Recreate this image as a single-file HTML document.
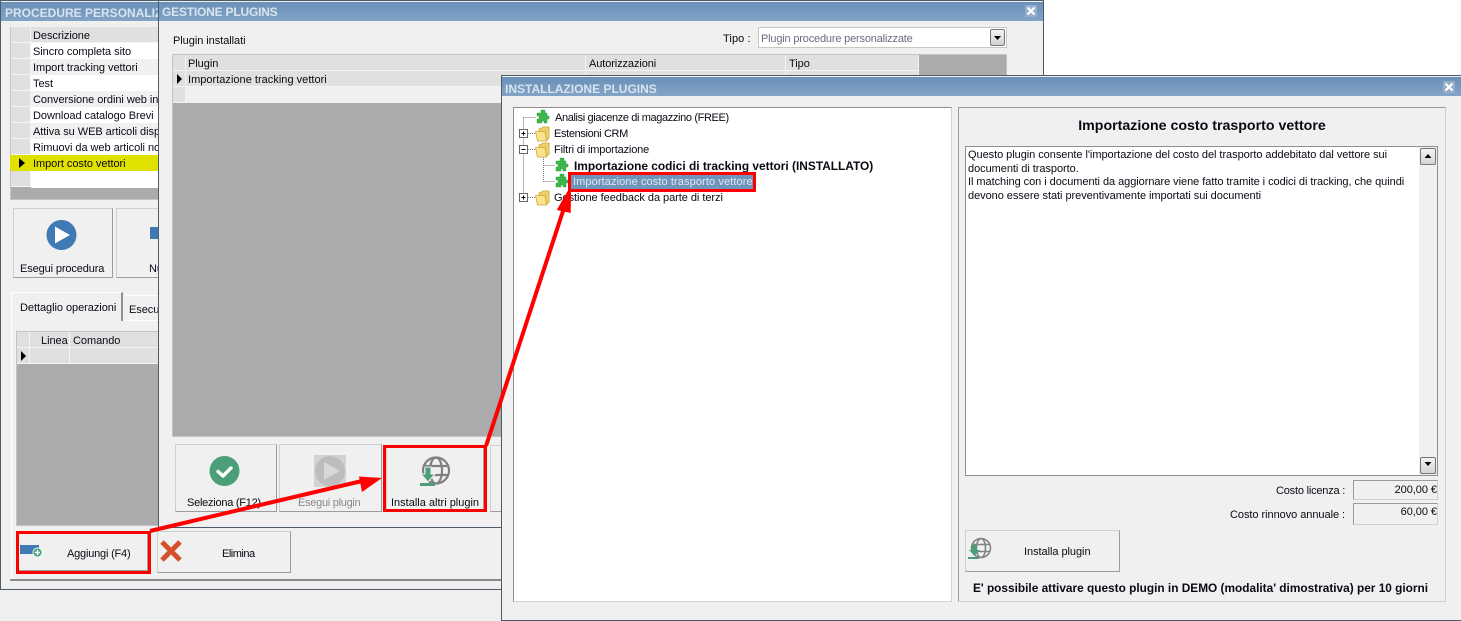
<!DOCTYPE html>
<html><head><meta charset="utf-8"><style>
html,body{margin:0;padding:0;width:1461px;height:621px;overflow:hidden;background:#fff}
body{position:relative;font-family:"Liberation Sans",sans-serif;font-size:11px;letter-spacing:-.05px;color:#0a0a14}
div{position:absolute;box-sizing:border-box}
.t{white-space:nowrap;line-height:14px;height:14px}
.b{font-weight:bold;letter-spacing:0}
.win{background:#f0f0f0;border:1px solid #4d5a68;overflow:hidden}
.bar{left:0;right:0;height:19px;background:linear-gradient(#6a90b8,#82a3c6)}
.ttl{color:#d9e4ee;font-weight:bold;font-size:12px;line-height:18px;white-space:nowrap;letter-spacing:0}
.hc{background:#e0e0e0;border-right:1px solid #f4f4f4;border-bottom:1px solid #f4f4f4}
.btn{background:#f0f0f0;border:1px solid;border-color:#cfcfcf #9c9c9c #9c9c9c #cfcfcf}
.red{border:3px solid #f00}
svg{position:absolute;overflow:visible}
</style></head><body>

<!-- area under window 1 -->
<div style="left:0;top:589px;width:520px;height:32px;background:#efefef"></div>

<!-- WINDOW 1 -->
<div class="win" style="left:0;top:0;width:520px;height:590px">
 <div class="bar" style="top:1px"></div>
 <div class="ttl" style="left:4px;top:3px">PROCEDURE PERSONALIZZATE</div>
 <div style="left:9px;top:26px;width:390px;height:173px;background:#ababab;border:1px solid #c4c4c4"></div>
</div>
<div style="left:31px;top:43px;width:130px;height:145px;background:#fff"></div>
<div class="hc" style="left:11px;top:27px;width:20px;height:16px"></div>
<div class="hc" style="left:31px;top:27px;width:130px;height:16px"></div>
<div class="t" style="left:33px;top:29px">Descrizione</div>
<div class="hc" style="left:11px;top:43px;width:20px;height:16px"></div>
<div class="hc" style="left:11px;top:59px;width:20px;height:16px"></div>
<div class="hc" style="left:11px;top:75px;width:20px;height:16px"></div>
<div class="hc" style="left:11px;top:91px;width:20px;height:16px"></div>
<div class="hc" style="left:11px;top:107px;width:20px;height:16px"></div>
<div class="hc" style="left:11px;top:123px;width:20px;height:16px"></div>
<div class="hc" style="left:11px;top:139px;width:20px;height:16px"></div>
<div class="hc" style="left:11px;top:171px;width:20px;height:16px"></div>
<div style="left:31px;top:59px;width:130px;height:16px;background:#f0f0f0"></div>
<div style="left:31px;top:91px;width:130px;height:16px;background:#f0f0f0"></div>
<div style="left:31px;top:123px;width:130px;height:16px;background:#f0f0f0"></div>
<div style="left:10px;top:155px;width:150px;height:16px;background:#e1e100"></div>
<div class="t" style="left:33px;top:45px">Sincro completa sito</div>
<div class="t" style="left:33px;top:61px">Import tracking vettori</div>
<div class="t" style="left:33px;top:77px">Test</div>
<div class="t" style="left:33px;top:93px">Conversione ordini web in</div>
<div class="t" style="left:33px;top:109px">Download catalogo Brevi</div>
<div class="t" style="left:33px;top:125px">Attiva su WEB articoli disponibili</div>
<div class="t" style="left:33px;top:141px">Rimuovi da web articoli non</div>
<div class="t" style="left:33px;top:157px">Import costo vettori</div>
<svg style="left:0;top:0" width="160" height="400"><path d="M19 158l6 5-6 5z" fill="#000"/></svg>

<div class="btn" style="left:13px;top:208px;width:100px;height:70px"></div>
<svg style="left:46px;top:220px" width="31" height="31"><circle cx="15.500" cy="15" r="15" fill="#3f7ab5"/><path d="M9 6.500l15 8.500-15 8.500z" fill="#fff"/></svg>
<div class="t" style="left:20px;top:262px;letter-spacing:-.12px">Esegui procedura</div>
<div class="btn" style="left:116px;top:208px;width:60px;height:70px"></div>
<div style="left:150px;top:227px;width:20px;height:12px;background:#3f7ab5"></div>
<div class="t" style="left:149px;top:262px">Nuova</div>

<div style="left:11px;top:320px;width:160px;height:259px;border-left:1px solid #fff"></div>
<div style="left:123px;top:320px;width:40px;height:1px;background:#fff"></div>
<div style="left:10px;top:579px;width:500px;height:2px;background:#8a8a8a"></div>
<div style="left:11px;top:292px;width:112px;height:29px;background:#f0f0f0;border:1px solid #fff;border-right:2px solid #8f8f8f;border-bottom:0"></div>
<div class="t" style="left:20px;top:301px">Dettaglio operazioni</div>
<div style="left:125px;top:295px;width:50px;height:25px;background:#f0f0f0;border-top:1px solid #fff"></div>
<div class="t" style="left:129px;top:303px">Esecuzione</div>
<div style="left:16px;top:331px;width:150px;height:195px;background:#ababab;border:1px solid #c4c4c4"></div>
<div class="hc" style="left:17px;top:332px;width:13px;height:16px"></div>
<div class="hc" style="left:30px;top:332px;width:40px;height:16px"></div>
<div class="hc" style="left:70px;top:332px;width:96px;height:16px"></div>
<div class="hc" style="left:17px;top:348px;width:13px;height:16px"></div>
<div class="hc" style="left:30px;top:348px;width:40px;height:16px"></div>
<div class="hc" style="left:70px;top:348px;width:96px;height:16px"></div>
<div class="t" style="left:41px;top:334px">Linea</div>
<div class="t" style="left:73px;top:334px">Comando</div>
<svg style="left:0;top:0" width="40" height="400"><path d="M21 351l5 5-5 5z" fill="#000"/></svg>

<!-- WINDOW 2 -->
<div class="win" style="left:158px;top:0;width:886px;height:528px">
 <div class="bar" style="top:1px"></div>
 <div class="ttl" style="left:3px;top:2px;letter-spacing:-.2px">GESTIONE PLUGINS</div>
</div>
<svg style="left:1025px;top:5px" width="12" height="12"><rect width="12" height="12" fill="#94aecb"/><path d="M2.500 2.500l7 7M9.500 2.500l-7 7" stroke="#fff" stroke-width="2.200"/></svg>
<div class="t" style="left:173px;top:34px">Plugin installati</div>
<div class="t" style="left:723px;top:32px;letter-spacing:.1px">Tipo :</div>
<div style="left:758px;top:27px;width:249px;height:21px;background:#fff;border:1px solid #c8c8bc"></div>
<div class="t" style="left:761px;top:32px;color:#6c6c80;letter-spacing:-.18px">Plugin procedure personalizzate</div>
<div style="left:990px;top:29px;width:15px;height:17px;background:linear-gradient(#f4f4f4,#d0d0d0);border:1px solid #777;border-radius:2px"></div>
<svg style="left:990px;top:29px" width="15" height="17"><path d="M4 7h7l-3.500 4z" fill="#000"/></svg>

<div style="left:172px;top:54px;width:835px;height:383px;background:#ababab;border:1px solid #c4c4c4"></div>
<div class="hc" style="left:173px;top:55px;width:13px;height:16px"></div>
<div class="hc" style="left:186px;top:55px;width:400px;height:16px"></div>
<div class="hc" style="left:586px;top:55px;width:200px;height:16px"></div>
<div class="hc" style="left:786px;top:55px;width:133px;height:16px"></div>
<div class="hc" style="left:173px;top:71px;width:13px;height:16px"></div>
<div class="hc" style="left:186px;top:71px;width:400px;height:16px"></div>
<div class="hc" style="left:586px;top:71px;width:200px;height:16px"></div>
<div class="hc" style="left:786px;top:71px;width:133px;height:16px"></div>
<div class="hc" style="left:173px;top:87px;width:13px;height:16px"></div>
<div style="left:186px;top:87px;width:733px;height:16px;background:#f0f0f0"></div>
<div class="t" style="left:188px;top:57px">Plugin</div>
<div class="t" style="left:589px;top:57px;letter-spacing:-.1px">Autorizzazioni</div>
<div class="t" style="left:789px;top:57px">Tipo</div>
<div class="t" style="left:188px;top:73px;letter-spacing:.02px">Importazione tracking vettori</div>
<svg style="left:0;top:0" width="200" height="100"><path d="M177 74l5 5-5 5z" fill="#000"/></svg>

<div class="btn" style="left:175px;top:444px;width:102px;height:68px"></div>
<svg style="left:209px;top:456px" width="31" height="31"><circle cx="15.500" cy="15" r="15" fill="#4b9f78"/><path d="M9 15.500l5 4.500 8-8" fill="none" stroke="#fff" stroke-width="3.400" stroke-linecap="round" stroke-linejoin="round"/></svg>
<div class="t" style="left:187px;top:496px;letter-spacing:-.25px">Seleziona (F12)</div>
<div class="btn" style="left:279px;top:444px;width:103px;height:68px"></div>
<div style="left:314px;top:455px;width:32px;height:32px;background:#d2d2d2"></div>
<svg style="left:314px;top:455px" width="32" height="32"><circle cx="16" cy="16" r="15" fill="#bdbdbd"/><path d="M10 7l16 9-16 9z" fill="#d8d8d8"/></svg>
<div class="t" style="left:298px;top:496px;color:#8a8a8a;letter-spacing:-.28px">Esegui plugin</div>
<div class="btn" style="left:386px;top:446px;width:98px;height:64px"></div>
<svg style="left:419px;top:456px" width="33" height="31"><g fill="none" stroke="#808080" stroke-width="2.200"><circle cx="17" cy="14.500" r="13"/><ellipse cx="17" cy="14.500" rx="6" ry="13"/><path d="M4 10h26M4 19h26"/></g><path d="M6 11h6v7h4l-7 8-7-8h4z" fill="#4b9f78" stroke="#f0f0f0"/><rect x="1" y="27" width="15" height="3" fill="#4b9f78"/></svg>
<div class="t" style="left:391px;top:496px;letter-spacing:0">Installa altri plugin</div>
<div class="btn" style="left:490px;top:445px;width:20px;height:67px"></div>

<!-- bottom buttons of window 1 -->
<div class="btn" style="left:18px;top:533px;width:130px;height:38px"></div>
<div style="left:20px;top:545px;width:19px;height:9px;background:#3f7ab5"></div>
<svg style="left:32px;top:547px" width="11" height="11"><circle cx="5.500" cy="5.500" r="4.500" fill="#4b9f78" stroke="#dfe"/><path d="M5.500 3v5M3 5.500h5" stroke="#fff" stroke-width="1.500"/></svg>
<div class="t" style="left:67px;top:547px;letter-spacing:-.2px">Aggiungi (F4)</div>
<div class="btn" style="left:157px;top:531px;width:134px;height:42px"></div>
<svg style="left:160px;top:540px" width="22" height="22"><path d="M2 2l18 18M20 2L2 20" stroke="#d2502c" stroke-width="5"/></svg>
<div class="t" style="left:222px;top:547px;letter-spacing:-.5px">Elimina</div>

<!-- red frames under window 3 -->
<div class="red" style="left:383px;top:445px;width:104px;height:67px"></div>
<div class="red" style="left:16px;top:531px;width:135px;height:43px"></div>

<!-- WINDOW 3 -->
<div class="win" style="left:501px;top:75px;width:961px;height:546px">
 <div class="bar" style="top:1px"></div>
 <div class="ttl" style="left:3px;top:4px">INSTALLAZIONE PLUGINS</div>
</div>
<svg style="left:1443px;top:81px" width="12" height="12"><rect width="12" height="12" fill="#94aecb"/><path d="M2.500 2.500l7 7M9.500 2.500l-7 7" stroke="#fff" stroke-width="2.200"/></svg>
<div style="left:513px;top:107px;width:439px;height:495px;background:#fff;border:1px solid #8e8e8e;border-right-color:#d0d0d0;border-bottom-color:#d0d0d0"></div>
<div style="left:958px;top:107px;width:488px;height:495px;border:1px solid #d0d0d0;border-top:1px solid #9c9c9c;border-left:1px solid #9c9c9c"></div>

<svg style="left:510px;top:105px" width="70" height="110">
 <g stroke="#777" stroke-dasharray="1 1" fill="none">
  <path d="M13.500 12.500V88M13.500 12.500H26M18 28.500H25M18 44.500H25M18 92.500H25M33.500 50V76.500M33.500 60.500H45M33.500 76.500H45"/>
 </g>
 <g fill="#fff" stroke="#666"><rect x="9.500" y="24.500" width="8" height="8"/><rect x="9.500" y="40.500" width="8" height="8"/><rect x="9.500" y="88.500" width="8" height="8"/></g>
 <path d="M11.500 28.500h4M13.500 26.500v4M11.500 44.500h4M11.500 92.500h4M13.500 90.500v4" stroke="#000"/>
 <g stroke="#c9a53c" stroke-width=".8">
  <g transform="translate(25 22)"><path d="M4 4V2l2-1h1l1-1h6v11l-3 3z" fill="#f0cf62"/><path d="M.5 4.500h9.500l1.500 9.500h-9z" fill="#fbe38c"/></g>
  <g transform="translate(25 38)"><path d="M4 4V2l2-1h1l1-1h6v11l-3 3z" fill="#f0cf62"/><path d="M.5 4.500h9.500l1.500 9.500h-9z" fill="#fbe38c"/></g>
  <g transform="translate(25 86)"><path d="M4 4V2l2-1h1l1-1h6v11l-3 3z" fill="#f0cf62"/><path d="M.5 4.500h9.500l1.500 9.500h-9z" fill="#fbe38c"/></g>
 </g>
 <g fill="#3db64b" stroke="#2a9a3a" stroke-width=".4">
  <path transform="translate(26 5)" d="M4 3h1V0h4v3h2v3h2v3h-2v4H8v-2H6v2H1V9h2V6H1V3z"/>
  <path transform="translate(45 53)" d="M4 3h1V0h4v3h2v3h2v3h-2v4H8v-2H6v2H1V9h2V6H1V3z"/>
  <path transform="translate(45 69)" d="M4 3h1V0h4v3h2v3h2v3h-2v4H8v-2H6v2H1V9h2V6H1V3z"/>
 </g>
</svg>

<div class="t" style="left:555px;top:111px;letter-spacing:-.37px">Analisi giacenze di magazzino (FREE)</div>
<div class="t" style="left:554px;top:127px;letter-spacing:-.35px">Estensioni CRM</div>
<div class="t" style="left:554px;top:143px;letter-spacing:-.15px">Filtri di importazione</div>
<div class="t b" style="left:574px;top:159px;font-size:11.900px">Importazione codici di tracking vettori (INSTALLATO)</div>
<div style="left:571px;top:174px;width:182px;height:16px;background:#6f95bd"></div>
<div class="t" style="left:573px;top:175px;color:#dfe8f2;letter-spacing:.1px">Importazione costo trasporto vettore</div>
<div class="red" style="left:568px;top:172px;width:188px;height:20px"></div>
<div class="t" style="left:554px;top:191px">Gestione feedback da parte di terzi</div>

<div class="t b" style="left:958px;top:119px;width:488px;text-align:center;font-size:14.200px">Importazione costo trasporto vettore</div>
<div style="left:965px;top:146px;width:473px;height:330px;background:#fff;border:1px solid #8e8e8e"></div>
<div style="left:1419px;top:147px;width:18px;height:328px;background:#f0f0f0"></div>
<div style="left:1420px;top:148px;width:16px;height:17px;background:linear-gradient(#f4f4f4,#d4d4d4);border:1px solid #777;border-radius:2px"></div>
<div style="left:1420px;top:457px;width:16px;height:17px;background:linear-gradient(#f4f4f4,#d4d4d4);border:1px solid #777;border-radius:2px"></div>
<svg style="left:1420px;top:148px" width="16" height="326"><path d="M4.500 10h7L8 6zM4.500 314h7L8 318z" fill="#000"/></svg>
<div class="t" style="left:968px;top:149px;line-height:13.670px;height:auto">Questo plugin consente l'importazione del costo del trasporto addebitato dal vettore sui<br>documenti di trasporto.<br>Il matching con i documenti da aggiornare viene fatto tramite i codici di tracking, che quindi<br>devono essere stati preventivamente importati sui documenti</div>

<div class="t" style="left:1276px;top:484px;letter-spacing:-.2px">Costo licenza :</div>
<div class="t" style="left:1230px;top:508px">Costo rinnovo annuale :</div>
<div style="left:1353px;top:480px;width:85px;height:20px;border:1px solid #d0d0d0;border-top:1px solid #9a9a9a;border-left:1px solid #9a9a9a"></div>
<div style="left:1353px;top:503px;width:85px;height:22px;border:1px solid #d0d0d0;border-top:1px solid #9a9a9a;border-left:1px solid #9a9a9a"></div>
<div class="t" style="left:1353px;width:84px;top:483px;text-align:right">200,00 €</div>
<div class="t" style="left:1353px;width:84px;top:505px;text-align:right">60,00 €</div>

<div class="btn" style="left:965px;top:530px;width:155px;height:42px"></div>
<svg style="left:968px;top:537px" width="24" height="24"><g fill="none" stroke="#808080" stroke-width="1.500"><circle cx="13" cy="11" r="9.500"/><ellipse cx="13" cy="11" rx="4.500" ry="9.500"/><path d="M4 7.500h18M4 14.500h18"/></g><path d="M4 8h5v5h3l-5.500 5.500L1 13h3z" fill="#4b9f78"/><rect x="0" y="20" width="11" height="2" fill="#4b9f78"/></svg>
<div class="t" style="left:1024px;top:545px">Installa plugin</div>
<div class="t b" style="left:958px;top:581px;width:485px;text-align:center;font-size:11.850px">E' possibile attivare questo plugin in DEMO (modalita' dimostrativa) per 10 giorni</div>

<!-- ARROWS -->
<svg style="left:0;top:0" width="1461" height="621">
 <path d="M150 531L362 481" stroke="#f00" stroke-width="4" fill="none"/>
 <path d="M382 478L359 476.500L362 492z" fill="#f00"/>
 <path d="M486 446L564 208" stroke="#f00" stroke-width="4" fill="none"/>
 <path d="M568 190.500L571 190.500L570.700 213L556.700 210z" fill="#f00"/>
</svg>
</body></html>
